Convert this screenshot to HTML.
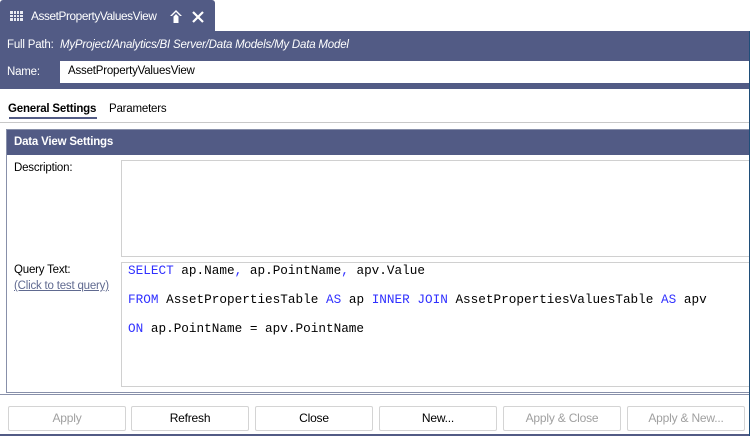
<!DOCTYPE html>
<html><head><style>
body{margin:0;width:750px;height:436px;background:#fff;position:relative;overflow:hidden;font-family:"Liberation Sans",sans-serif;font-size:11.5px;letter-spacing:-0.2px;color:#000}
.a{position:absolute}
.dk{background:#525b85}
.btn{position:absolute;top:406px;width:116px;height:23px;border:1px solid #d4d4d4;border-radius:2px;background:#fff;text-align:center;line-height:23px;font-size:12px}
.dis{color:#a0a0a0}
.code{font-family:"Liberation Mono",monospace;font-size:12.7px;letter-spacing:0;position:absolute;left:128px;color:#000}
.k{color:#3030ff}
</style></head><body>
<div class="a dk" style="left:0;top:0;width:215px;height:32px;border-radius:3px 3px 0 0"></div>
<svg class="a" style="left:10px;top:11px" width="13" height="10"><rect width="13" height="10" fill="#e8eaf2"/><g stroke="#525b85" stroke-width="1"><line x1="0" y1="3.5" x2="13" y2="3.5"/><line x1="0" y1="6.5" x2="13" y2="6.5"/><line x1="3.5" y1="0" x2="3.5" y2="10"/><line x1="6.5" y1="0" x2="6.5" y2="10"/><line x1="9.5" y1="0" x2="9.5" y2="10"/></g></svg>
<div class="a" style="left:31px;top:9px;color:#fff;font-size:11.8px;letter-spacing:-0.4px">AssetPropertyValuesView</div>
<svg class="a" style="left:169px;top:9px" width="14" height="15"><path d="M7 1 L13 7 L9.5 7 L9.5 14 L4.5 14 L4.5 7 L1 7 Z" fill="#fff"/><path d="M3 8 L7 4 L11 8" stroke="#525b85" stroke-width="1.5" fill="none"/></svg>
<svg class="a" style="left:192px;top:11px" width="12" height="12"><path d="M1 1L11 11M11 1L1 11" stroke="#fff" stroke-width="2.2"/></svg>
<div class="a dk" style="left:0;top:31px;width:750px;height:58px"></div>
<div class="a" style="left:7px;top:39px;color:#fff">Full Path:</div>
<div class="a" style="left:60px;top:39px;color:#fff;font-style:italic">MyProject/Analytics/BI Server/Data Models/My Data Model</div>
<div class="a" style="left:7px;top:66px;color:#fff">Name:</div>
<div class="a" style="left:60px;top:61px;width:690px;height:22px;background:#fff"></div>
<div class="a" style="left:68px;top:65px">AssetPropertyValuesView</div>
<div class="a" style="left:8px;top:103px;font-weight:bold">General Settings</div>
<div class="a" style="left:9px;top:117px;width:88px;height:2px;background:#525b85"></div>
<div class="a" style="left:109px;top:103px">Parameters</div>
<div class="a" style="left:0;top:122px;width:750px;height:1px;background:#c8c8c8"></div>
<div class="a" style="left:6px;top:129px;width:743px;height:262px;border:1px solid #8890aa;border-right:none"></div>
<div class="a dk" style="left:7px;top:130px;width:743px;height:25px"></div>
<div class="a" style="left:14px;top:136px;color:#fff;font-weight:bold">Data View Settings</div>
<div class="a" style="left:14px;top:162px">Description:</div>
<div class="a" style="left:121px;top:160px;width:629px;height:95px;border:1px solid #d0d0d0;border-right:none"></div>
<div class="a" style="left:14px;top:264px">Query Text:</div>
<div class="a" style="left:14px;top:280px;color:#606a90;text-decoration:underline">(Click to test query)</div>
<div class="a" style="left:121px;top:262px;width:629px;height:123px;border:1px solid #d0d0d0;border-right:none"></div>
<div class="code" style="top:263px"><span class="k">SELECT</span> ap.Name<span class="k">,</span> ap.PointName<span class="k">,</span> apv.Value</div>
<div class="code" style="top:292px"><span class="k">FROM</span> AssetPropertiesTable <span class="k">AS</span> ap <span class="k">INNER JOIN</span> AssetPropertiesValuesTable <span class="k">AS</span> apv</div>
<div class="code" style="top:321px"><span class="k">ON</span> ap.PointName = apv.PointName</div>
<div class="a" style="left:0;top:394px;width:750px;height:1px;background:#8890aa"></div>
<div class="btn dis" style="left:8px">Apply</div>
<div class="btn" style="left:131px">Refresh</div>
<div class="btn" style="left:255px">Close</div>
<div class="btn" style="left:379px">New...</div>
<div class="btn dis" style="left:503px">Apply &amp; Close</div>
<div class="btn dis" style="left:627px">Apply &amp; New...</div>
<div class="a" style="left:0;top:434px;width:750px;height:2px;background:#525b85"></div>
<div class="a" style="left:749px;top:31px;width:1px;height:405px;background:#1f4e79"></div>
</body></html>
